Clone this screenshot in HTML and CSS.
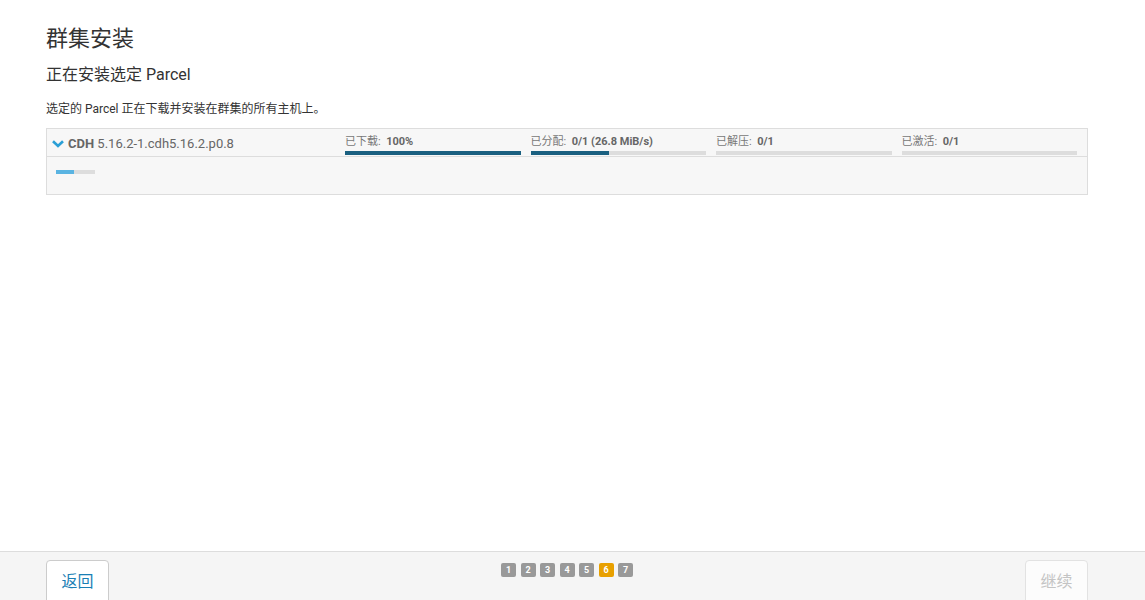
FILE: index.html
```html
<!DOCTYPE html>
<html lang="zh">
<head>
<meta charset="utf-8">
<title>群集安装</title>
<link rel="stylesheet" href="styles.css">
</head>
<body>
<div class="page">
  <main class="content">
    <h1 class="title">群集安装</h1>
    <h2 class="subtitle">正在安装选定 Parcel</h2>
    <p class="desc">选定的 Parcel 正在下载并安装在群集的所有主机上。</p>
    <div class="parcel">
      <div class="parcel-head">
        <div class="parcel-name">
          <svg class="chev" width="12" height="8" viewBox="0 0 12 8"><path d="M1 1.2 L6 6 L11 1.2" fill="none" stroke="#2a9fd6" stroke-width="2.6"/></svg>
          <span class="name-text"><b>CDH</b> 5.16.2-1.cdh5.16.2.p0.8</span>
        </div>
        <div class="stat">
          <div class="stat-label">已下载:&nbsp; <b>100%</b></div>
          <div class="bar"><div class="fill" style="width:100%"></div></div>
        </div>
        <div class="stat">
          <div class="stat-label">已分配:&nbsp; <b>0/1 (26.8 MiB/s)</b></div>
          <div class="bar"><div class="fill" style="width:45%"></div></div>
        </div>
        <div class="stat">
          <div class="stat-label">已解压:&nbsp; <b>0/1</b></div>
          <div class="bar"></div>
        </div>
        <div class="stat">
          <div class="stat-label">已激活:&nbsp; <b>0/1</b></div>
          <div class="bar"></div>
        </div>
      </div>
      <div class="parcel-body">
        <div class="mini"><div class="mini-fill" style="width:46%"></div></div>
      </div>
    </div>
  </main>
  <footer class="footer">
    <button class="btn back">返回</button>
    <div class="pager">
      <span class="step">1</span><span class="step">2</span><span class="step">3</span><span class="step">4</span><span class="step">5</span><span class="step active">6</span><span class="step">7</span>
    </div>
    <button class="btn next" disabled>继续</button>
  </footer>
</div>
</body>
</html>
```
FILE: styles.css
```css
* { box-sizing: border-box; }
html, body { margin: 0; padding: 0; height: 100%; }
body {
  font-family: Roboto, "Noto Sans CJK SC", sans-serif;
  color: #333;
  background: #fff;
  overflow: hidden;
}
.page {
  height: 600px;
  display: flex;
  flex-direction: column;
}
.content {
  flex: 1;
  padding: 24px 57px 0 46px;
}
.title {
  margin: 0;
  font-size: 22px;
  line-height: 30px;
  font-weight: 400;
  color: #333;
}
.subtitle {
  margin: 10px 0 0;
  font-size: 16px;
  line-height: 22px;
  font-weight: 400;
  color: #333;
}
.desc {
  margin: 14px 0 0;
  font-size: 12px;
  line-height: 18px;
  color: #333;
}
.parcel {
  margin-top: 10px;
  border: 1px solid #ddd;
  background: #f7f7f7;
}
.parcel-head {
  display: flex;
  height: 28px;
  border-bottom: 1px solid #ddd;
}
.parcel-name {
  width: 298px;
  display: flex;
  align-items: center;
  padding: 1px 0 0 5px;
}
.name-text {
  font-size: 13px;
  color: #666;
  white-space: nowrap;
}
.name-text b { color: #666; font-weight: 700; }
.chev { margin-right: 4px; margin-top: 1px; flex: none; }
.stat {
  flex: 1;
  padding: 6px 10px 0 0;
  display: flex;
  flex-direction: column;
}
.stat-label {
  font-size: 11px;
  line-height: 13px;
  color: #777;
  white-space: nowrap;
}
.stat-label b { color: #666; font-weight: 700; }
.bar {
  margin-top: 3px;
  height: 4px;
  background: #ddd;
}
.fill { height: 100%; background: #1a6080; }
.parcel-body {
  height: 37px;
  padding: 13px 0 0 9px;
}
.mini {
  width: 39px;
  height: 4px;
  background: #ddd;
}
.mini-fill { height: 100%; background: #5ab4e2; }
.footer {
  height: 49px;
  border-top: 1px solid #ddd;
  background: #f5f5f5;
  display: flex;
  align-items: flex-start;
  justify-content: space-between;
  padding: 8px 57px 0 46px;
}
.btn {
  width: 63px;
  height: 46px;
  border: 1px solid #ccc;
  border-radius: 4px;
  background: #fff;
  font-family: Roboto, "Noto Sans CJK SC", sans-serif;
  font-size: 16px;
  padding: 0 0 6px;
  color: #1a7fb5;
}
.btn.next {
  background: #fcfcfc;
  border-color: #e2e2e2;
  color: #c4c4c4;
}
.pager {
  display: flex;
  gap: 4.5px;
  margin-top: 3px;
}
.step {
  width: 15px;
  height: 14px;
  border-radius: 2px;
  background: #999;
  color: #fff;
  font-size: 9px;
  font-weight: 700;
  line-height: 14px;
  text-align: center;
}
.step.active { background: #e8a000; }
```
